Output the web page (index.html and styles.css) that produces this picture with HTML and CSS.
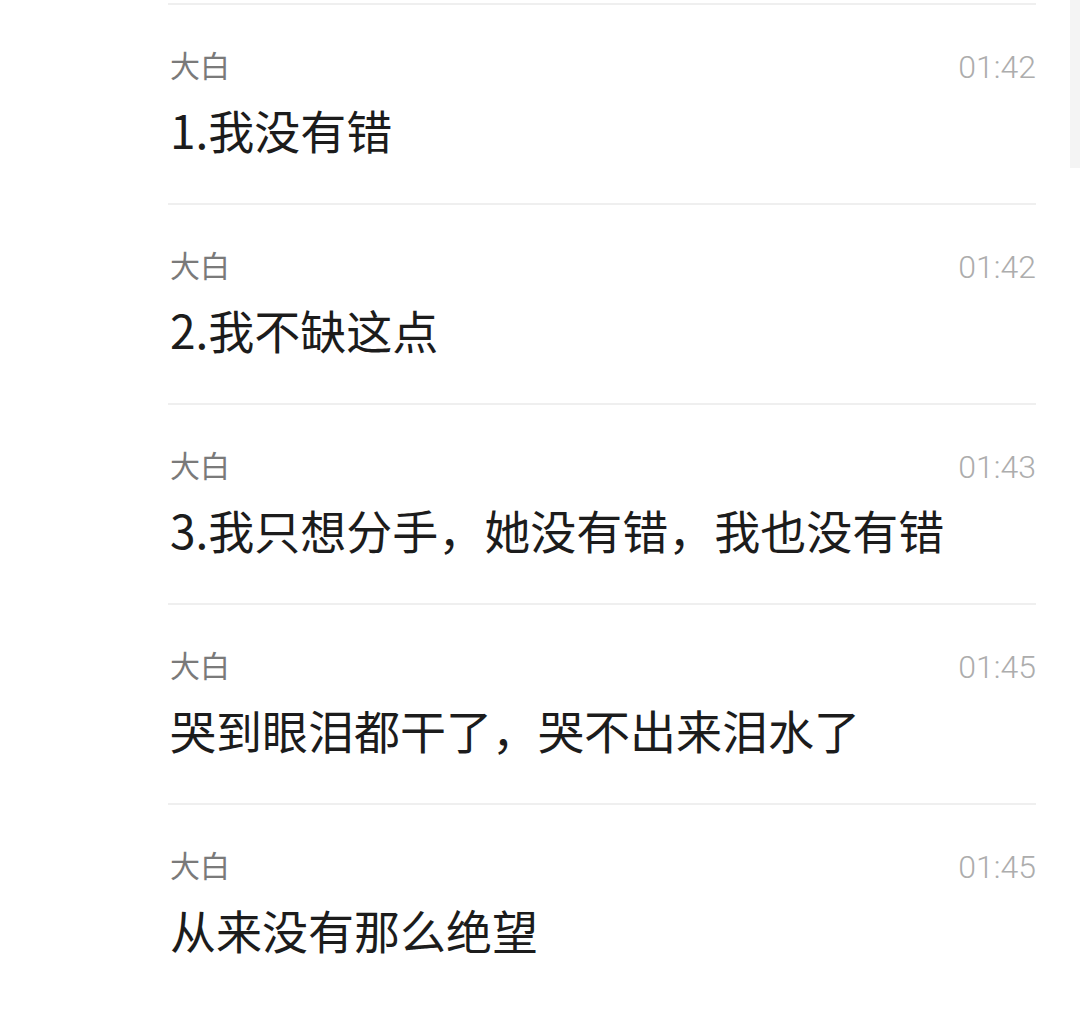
FILE: index.html
```html
<!DOCTYPE html>
<html lang="zh-CN">
<head>
    <meta charset="UTF-8">
    <title>聊天记录</title>
    <link rel="stylesheet" href="styles.css">
</head>
<body>
<div class="scroll-bar"></div>
<div class="list">
    <div class="item">
        <div class="head">
            <span class="name">大白</span>
            <span class="time">01:42</span>
        </div>
        <div class="msg">1.我没有错</div>
    </div>
    <div class="item">
        <div class="head">
            <span class="name">大白</span>
            <span class="time">01:42</span>
        </div>
        <div class="msg">2.我不缺这点</div>
    </div>
    <div class="item">
        <div class="head">
            <span class="name">大白</span>
            <span class="time">01:43</span>
        </div>
        <div class="msg">3.我只想分手，她没有错，我也没有错</div>
    </div>
    <div class="item">
        <div class="head">
            <span class="name">大白</span>
            <span class="time">01:45</span>
        </div>
        <div class="msg">哭到眼泪都干了，哭不出来泪水了</div>
    </div>
    <div class="item">
        <div class="head">
            <span class="name">大白</span>
            <span class="time">01:45</span>
        </div>
        <div class="msg">从来没有那么绝望</div>
    </div>
</div>
</body>
</html>
```

FILE: styles.css
```css
body {
    margin: 0;
    background: #fff;
    font-family: "Noto Sans CJK SC", "Noto Sans", sans-serif;
    overflow: hidden;
}
.scroll-bar {
    position: absolute;
    top: 0;
    right: 0;
    width: 10px;
    height: 168px;
    background: #f4f4f4;
}
.list {
    margin: 3px 0 0 168px;
    width: 868px;
}
.item {
    box-sizing: border-box;
    height: 200px;
    border-top: 2px solid #efefef;
    padding-top: 39px;
}
.head {
    display: flex;
    justify-content: space-between;
    align-items: center;
    height: 40px;
    padding-left: 2px;
}
.name {
    font-size: 30px;
    line-height: 40px;
    color: #7a7a7a;
}
.time {
    padding-top: 5px;
    font-family: Roboto, "Noto Sans", sans-serif;
    font-size: 32px;
    line-height: 40px;
    color: #adadad;
    font-weight: 300;
}
.msg {
    margin-top: 15px;
    padding-left: 2px;
    font-size: 46px;
    line-height: 60px;
    color: #1c1c1c;
}
```
